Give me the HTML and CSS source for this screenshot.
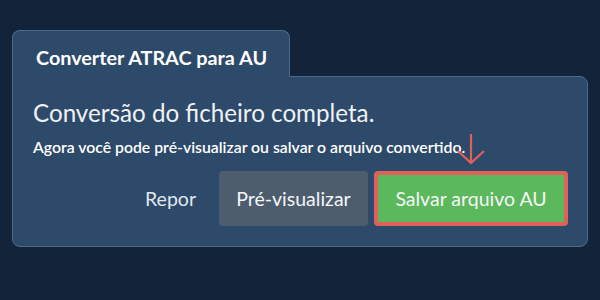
FILE: index.html
```html
<!DOCTYPE html>
<html lang="pt">
<head>
    <meta charset="UTF-8">
    <title>Converter ATRAC para AU</title>
    <link rel="stylesheet" href="styles.css">
</head>
<body>
    <div class="converter">
        <div class="tab">Converter ATRAC para AU</div>
        <div class="panel">
            <h2 class="status">Conversão do ficheiro completa.</h2>
            <p class="hint">Agora você pode pré-visualizar ou salvar o arquivo convertido.</p>
            <div class="actions">
                <button class="btn link">Repor</button>
                <button class="btn secondary">Pré-visualizar</button>
                <button class="btn success highlight">
                    Salvar arquivo AU
                    <svg class="pointer" width="30" height="32" viewBox="0 0 30 32">
                        <path d="M15 1 V30 M2 18 L15 30 L28 18" fill="none" stroke="#e0605a" stroke-width="2.2"/>
                    </svg>
                </button>
            </div>
        </div>
    </div>
</body>
</html>
```

FILE: styles.css
```css
* {
    margin: 0;
    padding: 0;
    box-sizing: border-box;
}

body {
    font-family: Lato, 'Open Sans', sans-serif;
    background: #12233a;
    color: #fff;
    padding: 30px 12px 0 12px;
}

.converter {
    width: 576px;
}

.tab {
    display: inline-block;
    position: relative;
    z-index: 1;
    width: 278px;
    height: 47px;
    margin-bottom: -1px;
    padding: 14px 0 0 23px;
    background: #2d4a6b;
    border: 1px solid #4d6a8c;
    border-bottom: none;
    border-radius: 8px 8px 0 0;
    font-size: 19.8px;
    font-weight: bold;
    line-height: 24px;
}

.panel {
    background: #2d4a6b;
    border: 1px solid #4d6a8c;
    border-radius: 0 8px 8px 8px;
    padding: 21px 19px 20px 20px;
}

.status {
    font-size: 24.2px;
    font-weight: normal;
    line-height: 30px;
    color: #f0f2f5;
}

.hint {
    font-size: 15.8px;
    font-weight: 600;
    line-height: 20px;
    margin-top: 9px;
    color: #fff;
}

.actions {
    display: flex;
    justify-content: flex-end;
    align-items: center;
    gap: 6px;
    margin-top: 14px;
}

.btn {
    font-family: Lato, 'Open Sans', sans-serif;
    font-size: 19.5px;
    height: 55px;
    border: none;
    border-radius: 4px;
    color: #f4f6f8;
    background: none;
    cursor: pointer;
}

.btn.link {
    padding: 0 17px 0 0;
    color: #e2e7ee;
}

.btn.secondary {
    width: 149px;
    background: #4d5d6e;
}

.btn.success {
    position: relative;
    width: 194px;
    background: #5cb85c;
}

.btn.highlight {
    border: 4px solid #e0605a;
}

.pointer {
    position: absolute;
    left: 78px;
    top: -42px;
}
```
